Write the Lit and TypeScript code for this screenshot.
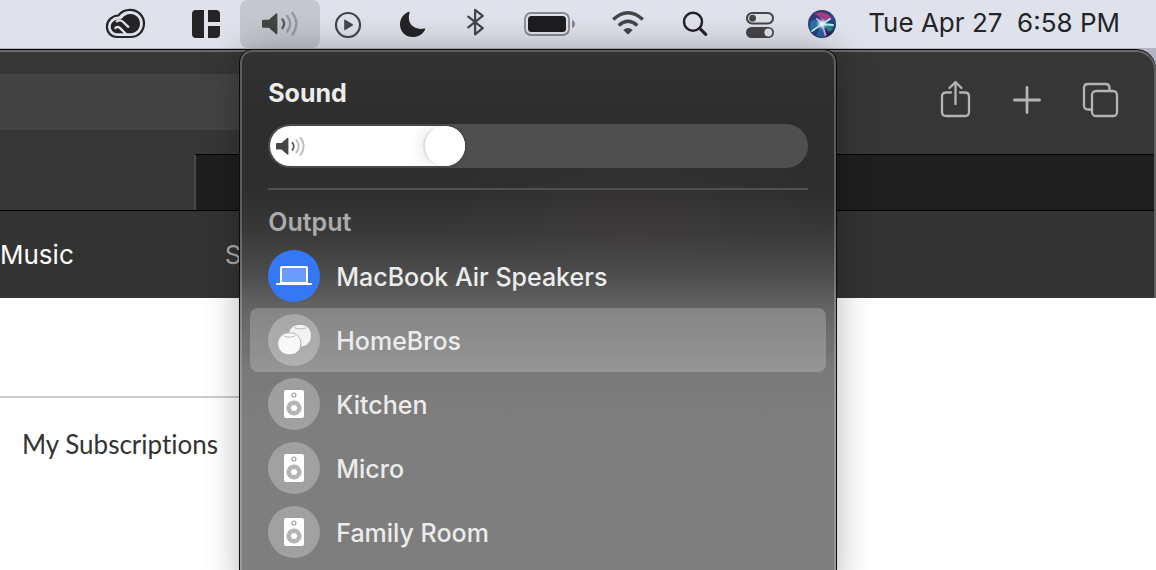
import { LitElement, html, css, svg } from "lit";
import { customElement, state } from "lit/decorators.js";
import { classMap } from "lit/directives/class-map.js";
import { styleMap } from "lit/directives/style-map.js";

const waves = svg`
  <path d="M1.2 8.8h5.6L14 2.6q1.4-1 1.4.8v18.8q0 1.8-1.4.8l-7.2-6.2H1.2q-1.2 0-1.2-1.2v-5.6q0-1.2 1.2-1.2z" fill="#454545"/>
  <g fill="none" stroke-width="2.3" stroke-linecap="round">
    <path d="M20.4 8.400q3.400 4.400 0 8.800" stroke="#5a5a5c"/>
    <path d="M25.2 5q6 7.800 0 15.600" stroke="currentColor"/>
    <path d="M30.4 2q8 10.800 0 21.600" stroke="currentColor"/>
  </g>`;

const icons = {
  cloud: html`<svg width="52" height="44" viewBox="0 0 52 44" fill="none">
    <path d="M18.300 13.500C21 10 25.500 7.900 30 7.900C38 7.900 44 14 44 21.600C44 29.300 38 35 30.500 35H17C11 35 6.900 30.500 6.900 24.800C6.900 18.500 12 13.700 18.300 13.500Z" stroke="#242426" stroke-width="2.200"/>
    <path d="M22 16.500C24 13.500 27 12 30.500 12C36 12 40 16.300 40 21.500C40 27 36 31.200 30.500 31.200H17C13.500 31.200 10.800 28.300 10.800 24.800C10.800 20.500 14.500 17.500 19 17.500Z" fill="#242426"/>
    <path d="M26.500 32.500L20.600 26.600C18.500 24.500 16.500 24.400 15.400 26" stroke="#e0e2eb" stroke-width="2.300" stroke-linecap="round"/>
    <path d="M16.800 19.400C19 18 21.300 18.200 23.200 20L28.300 24.800" stroke="#e0e2eb" stroke-width="2.300" stroke-linecap="round"/>
  </svg>`,
  grid: html`<svg width="44" height="44" viewBox="0 0 44 44" fill="#242426">
    <path d="M12 8h8v28h-8q-4 0-4-4V12q0-4 4-4zM24 8h8q4 0 4 4v8H24zM24 24h12v8q0 4-4 4h-8z"/></svg>`,
  play: html`<svg width="32" height="32" viewBox="0 0 32 32"><circle cx="16" cy="17" r="12" fill="none" stroke="#454547" stroke-width="2.200"/><path d="M12.200 12.400q0-1.200 1.100-.6l7.400 4.400q1 .7 0 1.400l-7.400 4.500q-1.100.5-1.100-.6z" fill="#454547"/></svg>`,
  moon: html`<svg width="32" height="32" viewBox="0 0 32 32"><path d="M13.600 4.300C10.500 15 17 22.500 28.300 20.600Q29.700 20.300 29 21.700C26.500 26.500 22 29 16.800 29C9.500 29 4 23.500 4 16.400C4 11 7 6.500 12 4.100Q13.900 3.200 13.600 4.300Z" fill="#242426"/></svg>`,
  bluetooth: html`<svg width="32" height="32" viewBox="0 0 32 32"><path d="M8.300 8.700L22.700 20.100L15.100 26.300V1.900L22.700 7.900L8.300 19.300" fill="none" stroke="#454547" stroke-width="2.300" stroke-linejoin="round" stroke-linecap="round"/></svg>`,
  battery: html`<svg width="52" height="32" viewBox="0 0 52 32"><rect x="1" y="5" width="44" height="22" rx="6" fill="none" stroke="#88898f" stroke-width="1.800"/><rect x="4" y="8" width="38" height="16" rx="3.500" fill="#1e1e20"/><path d="M48 12q3 1 3 4t-3 4z" fill="#88898f"/></svg>`,
  wifi: html`<svg width="40" height="32" viewBox="0 0 40 32"><g fill="none" stroke="#454547" stroke-width="3.400"><path d="M5.200 11.600Q20 -2.200 34.800 11.600"/><path d="M10.700 17.500Q20 9.200 29.300 17.500"/></g><path d="M15.300 22.100Q20 18.100 24.700 22.100L20.700 26Q20 26.700 19.300 26Z" fill="#454547"/></svg>`,
  search: html`<svg width="32" height="32" viewBox="0 0 32 32" fill="none" stroke="#242426"><circle cx="13" cy="13.700" r="9" stroke-width="2.500"/><path d="M19.700 20.400L25.700 26.400" stroke-width="3.200" stroke-linecap="round"/></svg>`,
  control: html`<svg width="32" height="32" viewBox="0 0 32 32"><rect x="3" y="5" width="26" height="10.500" rx="5.200" fill="none" stroke="#454547" stroke-width="2"/><circle cx="8.600" cy="10.200" r="3.400" fill="#454547"/><rect x="2" y="19" width="28" height="11" rx="5.500" fill="#454547"/><circle cx="24.300" cy="24.500" r="3.900" fill="#e0e2eb"/></svg>`,
  siri: html`<svg width="28" height="28" viewBox="0 0 28 28">
    <defs>
      <linearGradient id="orb" x1="0.200" y1="0" x2="0.600" y2="1"><stop offset="0" stop-color="#38306a"/><stop offset=".5" stop-color="#2a4a8c"/><stop offset="1" stop-color="#26264c"/></linearGradient>
      <radialGradient id="core"><stop offset="0" stop-color="#fff"/><stop offset=".4" stop-color="#dcf4ff" stop-opacity=".8"/><stop offset="1" stop-color="#8ad8ff" stop-opacity="0"/></radialGradient>
    </defs>
    <circle cx="14" cy="14" r="14" fill="url(#orb)"/>
    <path d="M6 4Q16 -1 24 8L15 13Q13 6 6 4Z" fill="#b8407f" opacity=".85"/>
    <path d="M2 13Q5 7 13 13L3 20Z" fill="#2c86b4" opacity=".7"/>
    <path d="M15 14L26 15Q25 20 21 22Z" fill="#2d9c96" opacity=".7"/>
    <path d="M13 15L18 27Q12 28 8 25Z" fill="#2f69b8" opacity=".8"/>
    <path d="M4 21L14 14L22 9M14 14L25 15" stroke="#b5f4ec" stroke-width="1.800" fill="none" stroke-linecap="round"/>
    <path d="M14 14L17.500 25M9 9L14 14" stroke="#e79fe0" stroke-width="1.800" stroke-linecap="round"/>
    <circle cx="14" cy="14" r="6" fill="url(#core)"/>
  </svg>`,
  share: html`<svg width="36" height="40" viewBox="0 0 36 40" fill="none" stroke="#b4b4b4" stroke-width="2.300" stroke-linecap="round" stroke-linejoin="round"><path d="M12 13.500H7q-4 0-4 4V33q0 4 4 4h19q4 0 4-4V17.500q0-4-4-4h-5M16.500 25V3.500M10.500 9L16.500 3L22.500 9"/></svg>`,
  plus: html`<svg width="36" height="40" viewBox="0 0 36 40" fill="none" stroke="#b4b4b4" stroke-width="2.800" stroke-linecap="round"><path d="M4.500 21H29.500M17 8.500V33.500"/></svg>`,
  tabs: html`<svg width="38" height="40" viewBox="0 0 38 40" fill="none" stroke="#b4b4b4" stroke-width="2.300"><path d="M10 30.500H7q-4 0-4-4V9q0-4 4-4h17.500q4 0 4 4v3"/><rect x="11" y="12" width="25" height="25" rx="4"/></svg>`,
  laptop: html`<svg width="52" height="52" viewBox="0 0 52 52"><rect x="13" y="17" width="26" height="16" rx="1" fill="#6a9cfb" stroke="#fff" stroke-width="2"/><path d="M8 33h36v1q0 1-1 1H9q-1 0-1-1z" fill="#fff"/></svg>`,
  minis: html`<svg width="52" height="52" viewBox="0 0 52 52"><path d="M25 12.500C28 10.400 36 10.400 39 12.500C44 17 44.500 26 39 30.500C35 33.700 27 33 23.500 30C18.500 25 20 16.500 25 12.500Z" fill="#f2f2f2"/><path d="M26 13.300C29 15.500 35.500 15.500 38.500 13.300" fill="none" stroke="#b8b8b8" stroke-width="1"/><path d="M14.500 20.500C17.500 18.300 25.500 18.300 28.500 20.500C34 25 34.500 34 29 38.500C26 41.300 17 41.300 14 38.500C8 34 8.500 25 14.500 20.500Z" fill="#f8f8f8" stroke="#aeaeae" stroke-width="1"/><path d="M15.500 21.500C18.500 23.700 24.500 23.700 27.500 21.500" fill="none" stroke="#b8b8b8" stroke-width="1"/></svg>`,
  speaker: html`<svg width="52" height="52" viewBox="0 0 52 52"><rect x="16" y="12" width="20" height="28" rx="2" fill="#fff"/><circle cx="26" cy="17" r="1.900" fill="none" stroke="#a8a8a8" stroke-width="1.300"/><circle cx="26" cy="30" r="5.300" fill="none" stroke="#b4b4b4" stroke-width="4.600"/></svg>`,
};

interface Output { name: string; icon: keyof typeof icons; }

@customElement("sound-panel")
class SoundPanel extends LitElement {
  @state() volume = 31;
  @state() active = 0;
  @state() hovered = 1;

  outputs: Output[] = [
    { name: "MacBook Air Speakers", icon: "laptop" },
    { name: "HomeBros", icon: "minis" },
    { name: "Kitchen", icon: "speaker" },
    { name: "Micro", icon: "speaker" },
    { name: "Family Room", icon: "speaker" },
  ];

  static styles = css`
    :host {
      display: block;
      box-sizing: border-box;
      border: 2px solid rgba(255, 255, 255, 0.22);
      border-radius: 12px;
      outline: 1px solid #0c0c0c;
      background:
        radial-gradient(ellipse 200px 100px at 66% 170px, rgba(90, 72, 72, 0.16), transparent),
        linear-gradient(#333 0, #2e2e2e 60px, #2e2e2e 140px, #383838 180px, #4a4a4a 220px, #656565 260px, #797979 320px, #7e7e7e 370px, #7e7e7e 520px);
      background-origin: border-box;
      box-shadow: 0 0 36px rgba(0, 0, 0, 0.3);
      color: #ececec;
      padding: 24px 8px;
    }
    .head { padding: 0 18px; }
    h2, h3 { margin: 0; font-size: 25px; line-height: 32px; }
    h2 { font-weight: 700; padding-top: 1px; }
    h3 { font-weight: 600; color: #acacac; padding: 16px 18px 0; }
    .slider {
      display: grid;
      box-sizing: border-box;
      height: 44px;
      margin-top: 15px;
      padding: 2px;
      border-radius: 22px;
      background: #4f4f4f;
    }
    .slider > * { grid-area: 1 / 1; }
    .fill { border-radius: 20px; background: #fff; box-shadow: 0 0 2px rgba(0, 0, 0, 0.4); }
    .glyph { align-self: center; margin-left: 6px; color: #bcbcbc; pointer-events: none; z-index: 1; }
    input {
      appearance: none;
      width: 100%;
      height: 40px;
      margin: 0;
      background: transparent;
    }
    input::-webkit-slider-runnable-track { height: 40px; }
    input::-webkit-slider-thumb {
      appearance: none;
      box-sizing: border-box;
      width: 42px;
      height: 40px;
      border-radius: 20px;
      background: #fff;
      border-left: 2px solid #ddd;
      box-shadow: -4px 0 12px rgba(0, 0, 0, 0.08);
    }
    hr { border: 0; height: 2px; margin: 20px 0 0; background: #505050; }
    ul { list-style: none; margin: 6px 0 0; padding: 0; }
    .row {
      display: flex;
      align-items: center;
      gap: 16px;
      width: 100%;
      height: 64px;
      padding: 0 18px;
      border: 0;
      border-radius: 8px;
      background: none;
      color: inherit;
      font: inherit;
      font-weight: 500;
      text-align: left;
    }
    .name { padding-top: 2px; }
    .hovered { background: rgba(255, 255, 255, 0.21); }
    .badge { height: 52px; border-radius: 50%; background: rgba(255, 255, 255, 0.27); }
    .active .badge { background: #3478f6; }
    svg { display: block; }
  `;

  render() {
    const thumb = 42;
    const width = `calc(${thumb}px + (100% - ${thumb}px) * ${this.volume / 100})`;
    return html`
      <div class="head">
        <h2 id="title">Sound</h2>
        <div class="slider">
          <span class="fill" style=${styleMap({ width })}></span>
          <input type="range" aria-labelledby="title" min="0" max="100" .value=${String(this.volume)}
            @input=${(e: Event) => (this.volume = Number((e.target as HTMLInputElement).value))} />
          <svg class="glyph" width="29" height="21" viewBox="0 0 36 26" aria-hidden="true">${waves}</svg>
        </div>
        <hr />
      </div>
      <h3>Output</h3>
      <ul>
        ${this.outputs.map((o, i) => html`<li>
          <button class=${classMap({ row: true, active: i === this.active, hovered: i === this.hovered })}
            @click=${() => (this.active = i)} @mouseenter=${() => (this.hovered = i)}>
            <span class="badge">${icons[o.icon]}</span><span class="name">${o.name}</span>
          </button></li>`)}
      </ul>`;
  }
}

@customElement("menu-bar")
class MenuBar extends LitElement {
  static styles = css`
    :host {
      display: flex;
      justify-content: flex-end;
      align-items: center;
      gap: 32px;
      box-sizing: border-box;
      height: 48px;
      padding-right: 36px;
      background: #e0e2eb;
      color: #242426;
    }
    button { display: block; flex: none; padding: 0; border: 0; background: none; color: inherit; font: inherit; }
    svg { display: block; }
    .slot { position: relative; margin: 0 -20px; }
    .open { display: grid; place-items: center; width: 80px; height: 48px; border-radius: 8px; background: #c5c7cf; color: #97989f; }
    sound-panel { position: absolute; top: 50px; left: 0; width: 596px; min-height: calc(100vh - 26px); }
    .clock { font-size: 26px; white-space: pre; padding-bottom: 2px; }
  `;
  item(label: string, icon: unknown) {
    return html`<button aria-label=${label}>${icon}</button>`;
  }
  render() {
    return html`
      ${this.item("Creative Cloud", icons.cloud)}
      ${this.item("Window layout", icons.grid)}
      <div class="slot">
        <button class="open" aria-label="Sound" aria-expanded="true">
          <svg width="36" height="26" viewBox="0 0 36 26">${waves}</svg>
        </button>
        <sound-panel></sound-panel>
      </div>
      ${this.item("Now Playing", icons.play)}
      ${this.item("Do Not Disturb", icons.moon)}
      ${this.item("Bluetooth", icons.bluetooth)}
      ${this.item("Battery", icons.battery)}
      ${this.item("Wi-Fi", icons.wifi)}
      ${this.item("Search", icons.search)}
      ${this.item("Control Center", icons.control)}
      ${this.item("Siri", icons.siri)}
      <button class="clock">Tue Apr 27  6:58 PM</button>`;
  }
}

@customElement("browser-window")
class BrowserWindow extends LitElement {
  static styles = css`
    :host { display: flex; flex-direction: column; min-height: 0; }
    .chrome {
      border-top: 2px solid #6c6c6c;
      border-right: 2px solid #616161;
      border-top-right-radius: 20px;
      box-shadow: 0 -1px 0 #000;
      background: #363636;
      overflow: hidden;
    }
    .toolbar { display: flex; align-items: center; height: 102px; }
    .address { width: 64%; height: 56px; margin-bottom: 2px; background: #434343; }
    .tools { display: flex; gap: 35px; margin: 0 0 8px auto; padding-right: 35px; }
    button { display: block; padding: 0; border: 0; background: none; }
    svg { display: block; }
    .tabs { display: flex; height: 56px; border-bottom: 1px solid #000; }
    .tab { width: 194px; }
    .rest { flex: 1; border-left: 2px solid #4a4a4a; border-top: 1px solid #000; background: #1e1e1e; }
    nav { display: flex; gap: 151px; padding: 28px 0 27px; background: #333; font-size: 26px; line-height: 32px; }
    nav a { color: #fff; text-decoration: none; }
    nav .dim { color: #aaa; }
    .page { flex: 1; background: #fff; padding-top: 98px; }
    .sidebar { width: 50%; border-top: 2px solid #ccc; }
    .sidebar p { margin: 0; padding: 30px 22px; font: 26px/32px Lato, sans-serif; font-variant-ligatures: none; color: #333; }
  `;
  render() {
    return html`
      <div class="chrome">
        <div class="toolbar">
          <div class="address"></div>
          <div class="tools">
            <button aria-label="Share">${icons.share}</button>
            <button aria-label="New Tab">${icons.plus}</button>
            <button aria-label="Tab Overview">${icons.tabs}</button>
          </div>
        </div>
        <div class="tabs"><div class="tab"></div><div class="rest"></div></div>
        <nav><a href="#">Music</a><a class="dim" href="#">S</a></nav>
      </div>
      <div class="page"><div class="sidebar"><p>My Subscriptions</p></div></div>`;
  }
}

@customElement("app-root")
class AppRoot extends LitElement {
  static styles = css`
    :host {
      display: flex;
      flex-direction: column;
      height: 100vh;
      overflow: hidden;
      background: #b2b5c1;
      font: 25px/32px Inter, "Liberation Sans", sans-serif;
    }
    menu-bar { position: relative; z-index: 1; }
    browser-window { flex: 1; margin-top: 2px; }
  `;
  render() {
    return html`<menu-bar></menu-bar><browser-window></browser-window>`;
  }
}
